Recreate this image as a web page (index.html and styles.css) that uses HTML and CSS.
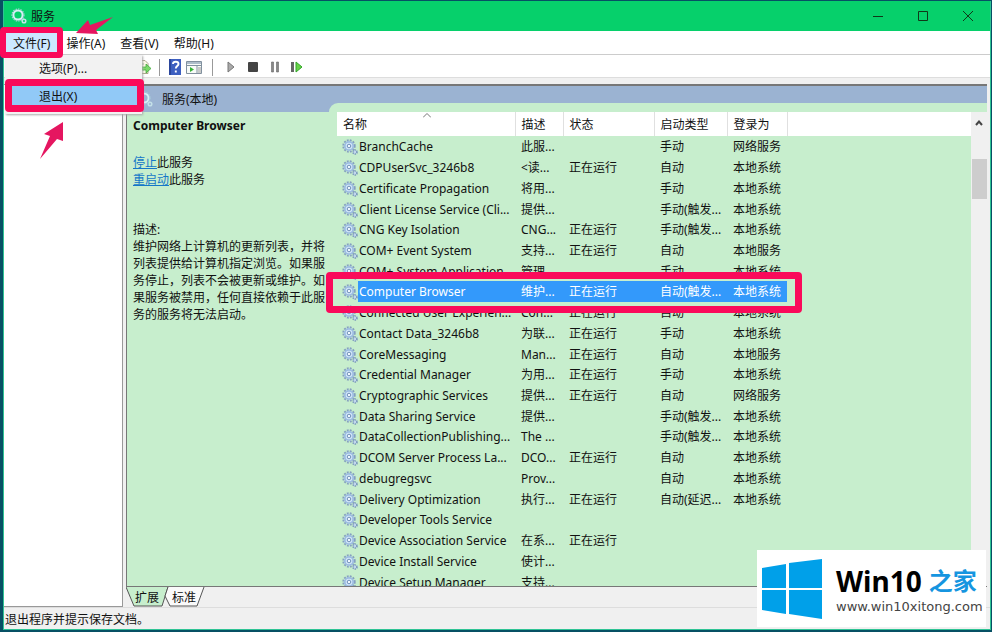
FILE: index.html
```html
<!DOCTYPE html>
<html lang="zh-CN">
<head>
<meta charset="utf-8">
<title>服务</title>
<link rel="stylesheet" href="styles.css">
</head>
<body>
<svg class="defs" aria-hidden="true">
  <symbol id="gear" viewBox="0 0 16 16">
    <circle cx="7" cy="7" r="5.7" fill="none" stroke="#86a0bf" stroke-width="2" stroke-dasharray="1.8 1.2"/>
    <circle cx="7" cy="7" r="4.2" fill="#d5e9fa" stroke="#9dbde2" stroke-width="1.8"/>
    <circle cx="7" cy="7" r="1.8" fill="#eff7ff" stroke="#6f8fb7"/>
    <circle cx="13" cy="13" r="2" fill="#c3d9ef" stroke="#7795b9" stroke-width="1.6" stroke-dasharray="1.2 .8"/>
  </symbol>
  <symbol id="gear-light" viewBox="0 0 16 16">
    <circle cx="7" cy="7" r="4.6" fill="none" stroke="#d8eef4" stroke-width="2"/>
    <circle cx="7" cy="7" r="6" fill="none" stroke="#a9cfdc" stroke-width="1.200" stroke-dasharray="1.5 1"/>
    <circle cx="13" cy="13" r="1.800" fill="none" stroke="#c4e0e8" stroke-width="1.500"/>
  </symbol>
</svg>
<div class="window">
  <header class="titlebar">
    <svg class="icon"><use href="#gear-light"/></svg>
    <h1>服务</h1>
    <div class="controls">
      <button aria-label="最小化"><svg viewBox="0 0 12 12"><path d="M1 6.500h10"/></svg></button>
      <button aria-label="最大化"><svg viewBox="0 0 12 12"><path d="M1.500 1.500h9v9h-9z"/></svg></button>
      <button aria-label="关闭"><svg viewBox="0 0 12 12"><path d="M1 1l10 10M11 1L1 11"/></svg></button>
    </div>
  </header>
  <nav class="menubar">
    <div class="menu">
      <button class="open">文件(F)</button>
      <div class="dropdown">
        <button>选项(P)...</button>
        <button class="active">退出(X)</button>
      </div>
    </div>
    <button>操作(A)</button>
    <button>查看(V)</button>
    <button>帮助(H)</button>
  </nav>
  <div class="toolbar">
    <button aria-label="导出列表"><svg viewBox="0 0 16 16"><path d="M1 1.500h8l3 3v10H1z" fill="#fffbea" stroke="#aaa58b"/><path d="M3 5h5M3 8h4M3 11h5" stroke="#aaa"/><path d="M6 8h4V5l5 4.500-5 4.500v-3H6z" fill="#7cd96b" stroke="#36a431" stroke-width=".7"/></svg></button>
    <span class="sep"></span>
    <button aria-label="帮助"><svg viewBox="0 0 16 16"><path d="M2 0h12v16H2z" fill="#3d5fc0"/><path d="M2 0h2v16H2z" fill="#2b469c"/><path d="M6 5c0-3 5.500-3 5.500 0 0 2-2.700 2.200-2.700 4.500M8.800 11.500v2" fill="none" stroke="#fff" stroke-width="1.900"/></svg></button>
    <button class="wide" aria-label="显示操作窗格"><svg viewBox="0 0 16 16"><path d="M.5 2.500h15v12H.5z" fill="#f8fbf8" stroke="#81909e"/><path d="M1 3h14v2H1z" fill="#aebdca"/><path d="M0 6.500h16M11 7v7" stroke="#81909e"/><path d="M4 8l4 2.500L4 13z" fill="#35b335"/><path d="M12 9h3M12 11h3M12 13h3" stroke="#999"/></svg></button>
    <span class="sep"></span>
    <button class="wide" aria-label="启动服务"><svg viewBox="0 0 16 16"><path d="M5 3l6 5-6 5z" fill="#aaa" stroke="#777"/></svg></button>
    <button class="wide" aria-label="停止服务"><svg viewBox="0 0 16 16"><rect x="3" y="3" width="10" height="10" rx="1" fill="#444"/></svg></button>
    <button class="wide" aria-label="暂停服务"><svg viewBox="0 0 16 16"><path d="M4.500 3h2v10h-2zM9.500 3h2v10h-2z" fill="#888" stroke="#666" stroke-width=".6"/></svg></button>
    <button class="wide" aria-label="重新启动服务"><svg viewBox="0 0 16 16"><path d="M2 3h3v10H2z" fill="#666"/><path d="M7 3l6 5-6 5z" fill="#67d347" stroke="#32a52a"/></svg></button>
  </div>
  <main class="content">
    <aside class="tree"></aside>
    <section class="pane">
      <div class="view">
        <div class="heading"><svg class="icon"><use href="#gear-light"/></svg><h2>服务(本地)</h2></div>
        <div class="split">
          <div class="details">
            <h3>Computer Browser</h3>
            <p><a href="#stop">停止</a>此服务<br><a href="#restart">重启动</a>此服务</p>
            <p class="description">描述:<br>维护网络上计算机的更新列表，并将列表提供给计算机指定浏览。如果服务停止，列表不会被更新或维护。如果服务被禁用，任何直接依赖于此服务的服务将无法启动。</p>
          </div>
          <div class="list">
            <div class="rows">
              <table>
                <colgroup><col class="c-name"><col class="c-desc"><col class="c-state"><col class="c-type"><col class="c-logon"><col></colgroup>
                <thead><tr><th>名称<svg class="sort" viewBox="0 0 8 5"><path d="M0 4.500l4-4 4 4"/></svg></th><th>描述</th><th>状态</th><th>启动类型</th><th>登录为</th><th></th></tr></thead>
                <tbody>
                <tr><td><svg class="icon"><use href="#gear"/></svg><span>BranchCache</span></td><td>此服...</td><td></td><td>手动</td><td>网络服务</td><td></td></tr>
                <tr><td><svg class="icon"><use href="#gear"/></svg><span>CDPUserSvc_3246b8</span></td><td>&lt;读...</td><td>正在运行</td><td>自动</td><td>本地系统</td><td></td></tr>
                <tr><td><svg class="icon"><use href="#gear"/></svg><span>Certificate Propagation</span></td><td>将用...</td><td></td><td>手动</td><td>本地系统</td><td></td></tr>
                <tr><td><svg class="icon"><use href="#gear"/></svg><span>Client License Service (Cli...</span></td><td>提供...</td><td></td><td>手动(触发...</td><td>本地系统</td><td></td></tr>
                <tr><td><svg class="icon"><use href="#gear"/></svg><span>CNG Key Isolation</span></td><td>CNG...</td><td>正在运行</td><td>手动(触发...</td><td>本地系统</td><td></td></tr>
                <tr><td><svg class="icon"><use href="#gear"/></svg><span>COM+ Event System</span></td><td>支持...</td><td>正在运行</td><td>自动</td><td>本地服务</td><td></td></tr>
                <tr><td><svg class="icon"><use href="#gear"/></svg><span>COM+ System Application</span></td><td>管理...</td><td></td><td>手动</td><td>本地系统</td><td></td></tr>
                <tr class="selected"><td><svg class="icon"><use href="#gear"/></svg><span>Computer Browser</span></td><td>维护...</td><td>正在运行</td><td>自动(触发...</td><td>本地系统</td><td></td></tr>
                <tr><td><svg class="icon"><use href="#gear"/></svg><span>Connected User Experien...</span></td><td>Con...</td><td>正在运行</td><td>自动</td><td>本地系统</td><td></td></tr>
                <tr><td><svg class="icon"><use href="#gear"/></svg><span>Contact Data_3246b8</span></td><td>为联...</td><td>正在运行</td><td>手动</td><td>本地系统</td><td></td></tr>
                <tr><td><svg class="icon"><use href="#gear"/></svg><span>CoreMessaging</span></td><td>Man...</td><td>正在运行</td><td>自动</td><td>本地服务</td><td></td></tr>
                <tr><td><svg class="icon"><use href="#gear"/></svg><span>Credential Manager</span></td><td>为用...</td><td>正在运行</td><td>手动</td><td>本地系统</td><td></td></tr>
                <tr><td><svg class="icon"><use href="#gear"/></svg><span>Cryptographic Services</span></td><td>提供...</td><td>正在运行</td><td>自动</td><td>网络服务</td><td></td></tr>
                <tr><td><svg class="icon"><use href="#gear"/></svg><span>Data Sharing Service</span></td><td>提供...</td><td></td><td>手动(触发...</td><td>本地系统</td><td></td></tr>
                <tr><td><svg class="icon"><use href="#gear"/></svg><span>DataCollectionPublishing...</span></td><td>The ...</td><td></td><td>手动(触发...</td><td>本地系统</td><td></td></tr>
                <tr><td><svg class="icon"><use href="#gear"/></svg><span>DCOM Server Process La...</span></td><td>DCO...</td><td>正在运行</td><td>自动</td><td>本地系统</td><td></td></tr>
                <tr><td><svg class="icon"><use href="#gear"/></svg><span>debugregsvc</span></td><td>Prov...</td><td></td><td>自动</td><td>本地系统</td><td></td></tr>
                <tr><td><svg class="icon"><use href="#gear"/></svg><span>Delivery Optimization</span></td><td>执行...</td><td>正在运行</td><td>自动(延迟...</td><td>本地系统</td><td></td></tr>
                <tr><td><svg class="icon"><use href="#gear"/></svg><span>Developer Tools Service</span></td><td></td><td></td><td></td><td></td><td></td></tr>
                <tr><td><svg class="icon"><use href="#gear"/></svg><span>Device Association Service</span></td><td>在系...</td><td>正在运行</td><td></td><td></td><td></td></tr>
                <tr><td><svg class="icon"><use href="#gear"/></svg><span>Device Install Service</span></td><td>使计...</td><td></td><td></td><td></td><td></td></tr>
                <tr><td><svg class="icon"><use href="#gear"/></svg><span>Device Setup Manager</span></td><td>支持...</td><td></td><td></td><td></td><td></td></tr>
                </tbody>
              </table>
            </div>
            <div class="scrollbar"><svg viewBox="0 0 8 6"><path d="M1 5l3-3.500L7 5"/></svg><div class="thumb"></div></div>
          </div>
        </div>
      </div>
      <div class="tabs">
        <button class="current"><svg viewBox="0 0 42 20" preserveAspectRatio="none"><path d="M0 0l8 19h28L42 0"/></svg><span>扩展</span></button>
        <button><svg viewBox="0 0 42 20" preserveAspectRatio="none"><path d="M5 0L2 9l5 10h27L41 0"/></svg><span>标准</span></button>
      </div>
    </section>
  </main>
  <footer class="status">退出程序并提示保存文档。</footer>
</div>

<div class="mark mark-file"></div>
<div class="mark mark-exit"></div>
<div class="mark mark-row"></div>
<svg class="arrow arrow-top" viewBox="0 0 40 22"><path d="M1 17L13 4l2 5L38 1 21 14l2 4z"/></svg>
<svg class="arrow arrow-bottom" viewBox="0 0 26 40"><path d="M25 1v19l-6-2L2 38 12 15 6 13z"/></svg>
<div class="brand">
  <svg viewBox="0 0 60 60"><path d="M0 9l24-4v24H0zM27 4l33-4v29H27zM0 31h24v24L0 51zM27 31h33v29l-33-5z"/></svg>
  <div><strong>Win10<em>之家</em></strong><a href="#home">www.win10xitong.com</a></div>
</div>
</body>
</html>
```
FILE: styles.css
```css
* { box-sizing: border-box; }
body {
  margin: 0;
  height: 100vh;
  padding: 1px 1px 2px 3px;
  display: flex;
  overflow: hidden;
  position: relative;
  background: #075064;
  color: #111;
  font: 12px/17px "Noto Sans", "Noto Sans CJK SC", sans-serif;
}
button {
  margin: 0;
  padding: 0;
  border: 0;
  background: none;
  color: inherit;
  font: inherit;
}
h1, h2, h3, p { margin: 0; font-size: 12px; font-weight: 400; }
a { color: #1577c8; }
.defs { position: absolute; width: 0; height: 0; }
.icon { width: 16px; height: 16px; flex: none; }

.window {
  flex: 1;
  min-width: 0;
  display: flex;
  flex-direction: column;
  background: #f0f0f0;
  border: solid #2fc494;
  border-width: 0 1px 1px;
}
.titlebar {
  flex: 0 0 30px;
  display: flex;
  align-items: center;
  gap: 4px;
  padding-left: 7px;
  background: #06d06b;
}
.controls { margin-left: auto; display: flex; height: 100%; }
.controls button { width: 45px; display: grid; place-items: center; }
.controls svg { width: 12px; height: 12px; fill: none; stroke: #103818; }

.menubar {
  flex: 0 0 24px;
  display: flex;
  background: #fff;
  border-bottom: 1px solid #ccc;
}
.menu { position: relative; display: flex; }
.menubar > button { padding: 2px 8px 0 7px; }
.menu > .open { padding: 2px 9px 0; background: #cce8ff; }
.dropdown {
  position: absolute;
  z-index: 2;
  top: 24px;
  left: 1px;
  width: 137px;
  padding-bottom: 6px;
  display: flex;
  flex-direction: column;
  gap: 4px;
  background: #f2f2f2;
  box-shadow: 1px 1px 2px #aaa;
}
.dropdown button { height: 26px; padding-left: 34px; text-align: left; }
.dropdown .active { height: 23px; background: #91c9f7; }

.toolbar {
  flex: 0 0 23px;
  display: flex;
  align-items: center;
  padding: 2px 0 0 132px;
  background: #fff;
  border-bottom: 1px solid #ddd;
}
.toolbar button { width: 16px; height: 16px; }
.toolbar .wide { width: 22px; padding: 0 3px; }
.toolbar svg { display: block; width: 16px; height: 16px; }
.sep { width: 1px; height: 17px; margin: 0 7px; background: #999; }

.content { flex: 1; min-height: 0; display: flex; margin-top: 6px; }
.tree {
  flex: 0 0 119px;
  margin-right: 3px;
  background: #fff;
  border: solid #999;
  border-width: 1px 1px 1px 0;
}
.pane { flex: 1; min-width: 0; display: flex; flex-direction: column; margin-right: 3px; }
.view {
  flex: 1;
  min-height: 0;
  display: flex;
  flex-direction: column;
  background: #c7eecd;
  border: solid #777;
  border-width: 2px 0 1px 1px;
}
.heading {
  flex: 0 0 26px;
  display: flex;
  align-items: center;
  gap: 9px;
  padding-left: 10px;
  background: #9bb3d2;
}
.split { flex: 1; min-height: 0; display: flex; }
.details { flex: 0 0 202px; padding: 5px 4px 0 6px; }
.details h3 { font-weight: 700; margin-bottom: 20px; }
.description { margin-top: 33px; }
.list {
  flex: 1;
  min-width: 0;
  display: flex;
  margin-top: -9px;
  padding: 9px 0 0 8px;
  background: #c7eecd;
  border-top-left-radius: 9px;
}
.rows { flex: 1; min-width: 0; overflow: hidden; }
table {
  width: 100%;
  height: calc(100% + 6px);
  table-layout: fixed;
  border-collapse: collapse;
}
.c-name { width: 178px; }
.c-desc { width: 48px; }
.c-state { width: 91px; }
.c-type { width: 73px; }
.c-logon { width: 60px; }
th {
  position: relative;
  height: 24px;
  padding: 0 0 0 6px;
  background: #fff;
  border-right: 1px solid #e0e0e0;
  font-weight: 400;
  text-align: left;
}
th:last-child { border: 0; }
.sort { position: absolute; top: 1px; left: 86px; width: 8px; height: 5px; fill: none; stroke: #777; }
td {
  padding: 2px 0 0 6px;
  line-height: 16px;
  white-space: nowrap;
}
td:first-child { padding-left: 5px; }
td .icon { display: inline-block; vertical-align: top; }
td span { padding-left: 1px; }
.selected { color: #fff; }
.selected td:not(:last-child) { background: #3399fb; }
.selected td:first-child { background: linear-gradient(90deg, #c7eecd 21px, #3399fb 21px); }
.scrollbar { flex: 0 0 16px; padding: 8px 0 0 1px; background: #f0f0f0; }
.scrollbar svg { display: block; width: 8px; height: 6px; margin: 0 auto 33px 3px; fill: none; stroke: #444; stroke-width: 2; }
.thumb { height: 40px; background: #cdcdcd; }

.tabs { flex: 0 0 20px; display: flex; }
.tabs button { position: relative; width: 42px; height: 20px; }
.tabs button + button { margin-left: -5px; }
.tabs svg { position: absolute; inset: 0; width: 100%; height: 100%; fill: #fafafa; stroke: #555; }
.tabs .current svg { fill: #c7eecd; }
.tabs span { position: relative; }
.status { flex: 0 0 22px; padding: 3px 0 0 1px; border-top: 1px solid #ddd; }

.mark { position: absolute; z-index: 3; border: 7px solid #fa0a5a; border-radius: 4px; }
.mark-file { left: 0; top: 27px; width: 63px; height: 31px; border-width: 6px; }
.mark-exit { left: 5px; top: 79px; width: 139px; height: 33px; }
.mark-row { left: 326px; top: 272px; width: 476px; height: 41px; }
.arrow { position: absolute; z-index: 3; fill: #e51660; }
.arrow-top { left: 75px; top: 16px; width: 40px; height: 22px; }
.arrow-bottom { left: 38px; top: 121px; width: 26px; height: 40px; }
.brand {
  position: absolute;
  z-index: 3;
  right: 6px;
  bottom: 5px;
  width: 229px;
  height: 77px;
  display: flex;
  align-items: center;
  gap: 14px;
  padding-left: 5px;
  background: #fff;
}
.brand svg { flex: none; width: 60px; height: 60px; fill: #00a0e9; }
.brand div { display: flex; flex-direction: column; white-space: nowrap; }
.brand strong { display: flex; align-items: center; gap: 7px; color: #000; font-size: 28px; line-height: 36px; }
.brand em { color: #1595e0; font-size: 24px; font-style: normal; }
.brand a { color: #444; font-size: 13px; line-height: 16px; text-decoration: none; font-family: "DejaVu Sans", sans-serif; }
```
